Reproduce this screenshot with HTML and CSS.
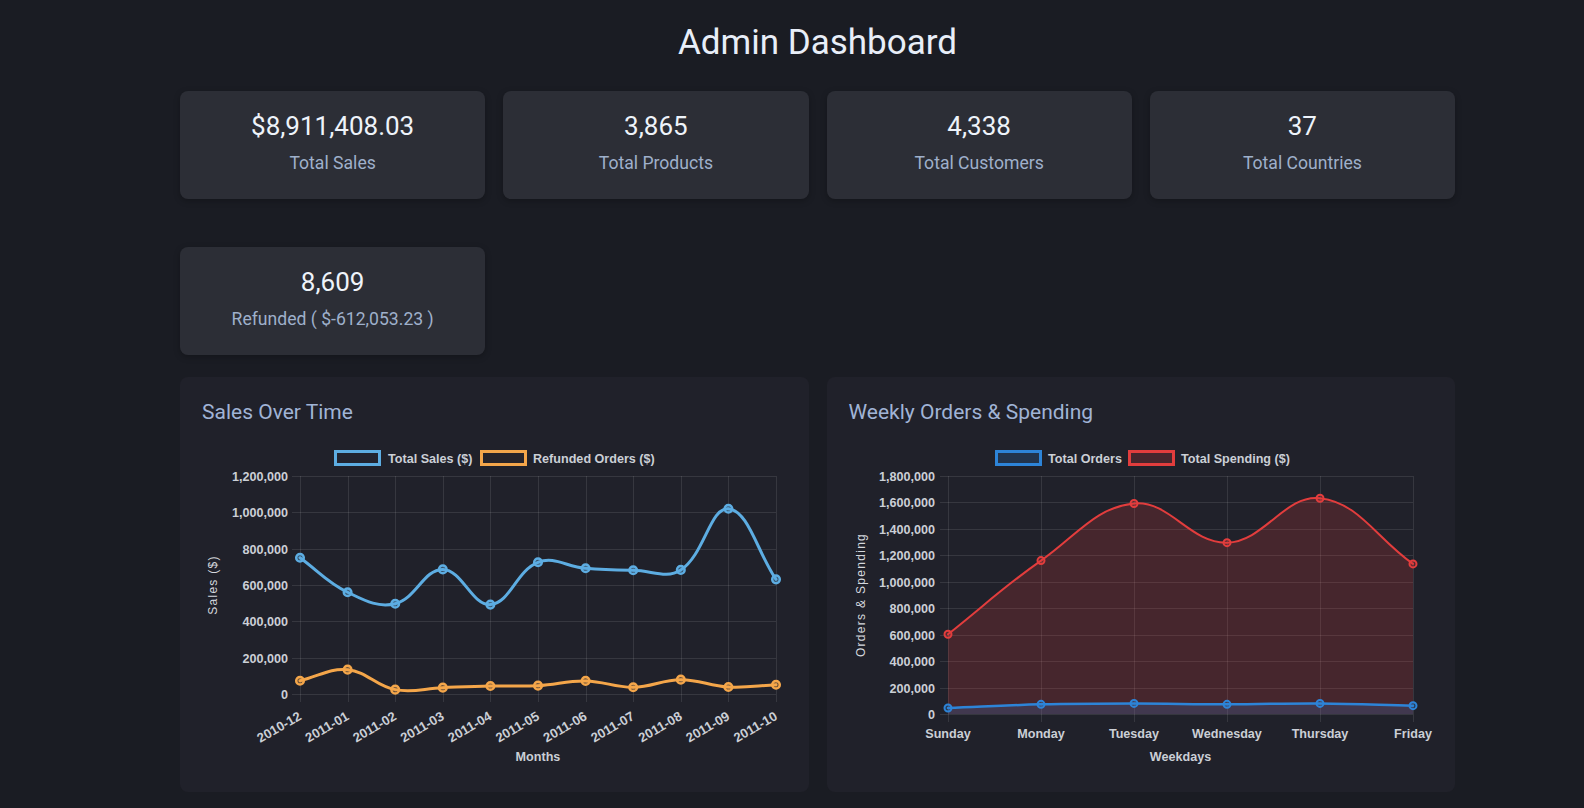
FILE: index.html
```html
<!DOCTYPE html>
<html lang="en">
<head>
<meta charset="utf-8">
<title>Admin Dashboard</title>
<link rel="stylesheet" href="styles.css">
</head>
<body>
<main class="page">
  <h1 class="title">Admin Dashboard</h1>
  <section class="stats">
    <div class="stat"><div class="stat-value">$8,911,408.03</div><div class="stat-label">Total Sales</div></div>
    <div class="stat"><div class="stat-value">3,865</div><div class="stat-label">Total Products</div></div>
    <div class="stat"><div class="stat-value">4,338</div><div class="stat-label">Total Customers</div></div>
    <div class="stat"><div class="stat-value">37</div><div class="stat-label">Total Countries</div></div>
    <div class="stat"><div class="stat-value">8,609</div><div class="stat-label">Refunded ( $-612,053.23 )</div></div>
  </section>
  <section class="charts">
    <div class="panel">
      <h3 class="panel-title">Sales Over Time</h3>
      <svg id="salesChart" class="chart" width="584" height="344" viewBox="0 0 584 344"></svg>
    </div>
    <div class="panel">
      <h3 class="panel-title">Weekly Orders &amp; Spending</h3>
      <svg id="weeklyChart" class="chart" width="584" height="344" viewBox="0 0 584 344"></svg>
    </div>
  </section>
</main>
<script src="script.js"></script>
</body>
</html>
```

FILE: styles.css
```css
* { box-sizing: border-box; }
html, body { margin: 0; background: #1a1c23; }
body {
  padding: 22px 0 0 51px;
  font-family: Roboto, "Noto Sans", Arial, sans-serif;
  color: #e6eef8;
}
.page { width: 1275px; margin: 0 auto; }
.title {
  margin: 0 0 27px;
  font-size: 35px;
  line-height: 42px;
  font-weight: 400;
  text-align: center;
  color: #e8eef8;
}
.stats {
  display: grid;
  grid-template-columns: repeat(4, 1fr);
  column-gap: 18px;
  row-gap: 48px;
}
.stat {
  height: 108px;
  padding-top: 20px;
  text-align: center;
  background: #2c2e36;
  border-radius: 8px;
  box-shadow: 0 2px 6px rgba(0, 0, 0, 0.25);
}
.stat-value { font-size: 26px; line-height: 31px; color: #eef3fa; }
.stat-label { margin-top: 10px; font-size: 17.6px; line-height: 22px; color: #9fb0cb; }
.charts {
  display: grid;
  grid-template-columns: 1fr 1fr;
  gap: 18px;
  margin-top: 22px;
}
.panel {
  background: #20212a;
  border-radius: 8px;
  padding: 23px 22px 12px;
}
.panel-title {
  margin: 0 0 11px;
  font-size: 21px;
  line-height: 25px;
  font-weight: 400;
  color: #a0b4d6;
}
.chart { display: block; width: 584px; height: 344px; overflow: visible; }
.chart text { font-family: "Liberation Sans", Arial, sans-serif; }
.tick, .legend-text, .axis-x { font-size: 12.6px; font-weight: 700; fill: #cbcfd6; }
.tick-rot { font-size: 13.2px; }
.axis-y { font-size: 12px; font-weight: 400; letter-spacing: 1.3px; fill: #d4d7dd; }
.grid line { stroke: rgba(255, 255, 255, 0.1); stroke-width: 1; }
```

FILE: script.js
```js
(function () {
  var NS = 'http://www.w3.org/2000/svg';
  function mk(parent, tag, attrs, text) {
    var e = document.createElementNS(NS, tag);
    for (var k in attrs) e.setAttribute(k, attrs[k]);
    if (text != null) e.textContent = text;
    parent.appendChild(e);
    return e;
  }
  function ctrl(pts, t, a) {
    var out = [];
    for (var i = 0; i < pts.length; i++) {
      var prev = pts[i - 1] || pts[i], cur = pts[i], next = pts[i + 1] || pts[i];
      var d01 = Math.hypot(cur.x - prev.x, cur.y - prev.y);
      var d12 = Math.hypot(next.x - cur.x, next.y - cur.y);
      var s01 = d01 / (d01 + d12) || 0, s12 = d12 / (d01 + d12) || 0;
      var fa = t * s01, fb = t * s12;
      var p = { x: cur.x - fa * (next.x - prev.x), y: cur.y - fa * (next.y - prev.y) };
      var n = { x: cur.x + fb * (next.x - prev.x), y: cur.y + fb * (next.y - prev.y) };
      [p, n].forEach(function (c) {
        c.x = Math.min(Math.max(c.x, a.l), a.r);
        c.y = Math.min(Math.max(c.y, a.t), a.b);
      });
      out.push({ p: p, n: n });
    }
    return out;
  }
  function f(v) { return v.toFixed(2); }
  function pathD(pts, t, a) {
    var c = ctrl(pts, t, a);
    var d = 'M' + f(pts[0].x) + ' ' + f(pts[0].y);
    for (var i = 1; i < pts.length; i++) {
      d += ' C' + f(c[i - 1].n.x) + ' ' + f(c[i - 1].n.y) + ' ' + f(c[i].p.x) + ' ' + f(c[i].p.y) + ' ' + f(pts[i].x) + ' ' + f(pts[i].y);
    }
    return d;
  }
  function draw(svg, cfg) {
    var a = cfg.area, n = cfg.labels.length;
    var xs = cfg.labels.map(function (_, i) { return a.l + (a.r - a.l) * i / (n - 1); });
    function y(v) { return a.b - v / cfg.max * (a.b - a.t); }
    var grid = mk(svg, 'g', { 'class': 'grid' });
    for (var v = 0; v <= cfg.max; v += cfg.step) {
      var yy = Math.round(y(v)) + 0.5;
      mk(grid, 'line', { x1: a.l - 8, y1: yy, x2: a.r, y2: yy });
      mk(svg, 'text', { 'class': 'tick', x: cfg.tickX, y: yy, 'text-anchor': 'end', 'dominant-baseline': 'central' }, v.toLocaleString('en-US'));
    }
    xs.forEach(function (x, i) {
      var xx = Math.round(x) + 0.5;
      mk(grid, 'line', { x1: xx, y1: a.t, x2: xx, y2: a.b + 8 });
      if (cfg.rotate) {
        mk(svg, 'text', { 'class': 'tick tick-rot', 'text-anchor': 'end', 'dominant-baseline': 'central',
          transform: 'translate(' + f(x) + ' ' + cfg.xLabelY + ') rotate(-30)' }, cfg.labels[i]);
      } else {
        mk(svg, 'text', { 'class': 'tick', x: f(x), y: cfg.xLabelY, 'text-anchor': 'middle', 'dominant-baseline': 'central' }, cfg.labels[i]);
      }
    });
    mk(svg, 'text', { 'class': 'axis-x', x: (a.l + a.r) / 2, y: cfg.xTitleY, 'text-anchor': 'middle', 'dominant-baseline': 'central' }, cfg.xTitle);
    mk(svg, 'text', { 'class': 'axis-y', 'text-anchor': 'middle', 'dominant-baseline': 'central',
      transform: 'translate(' + cfg.yTitleX + ' ' + ((a.t + a.b) / 2 + cfg.yTitleShift) + ') rotate(-90)' }, cfg.yTitle);

    cfg.legend.forEach(function (it, i) {
      var ds = cfg.datasets[i];
      mk(svg, 'rect', { x: it.box + 1.5, y: 15.5, width: 44, height: 13, fill: ds.legendFill, stroke: ds.color, 'stroke-width': 3 });
      mk(svg, 'text', { 'class': 'legend-text', x: it.text, y: 22.5, 'dominant-baseline': 'central' }, ds.label);
    });

    var sets = cfg.datasets.map(function (ds) {
      return { ds: ds, pts: ds.data.map(function (v, i) { return { x: xs[i], y: y(v) }; }) };
    });
    sets.slice().reverse().forEach(function (s) {
      if (!s.ds.area) return;
      var d = pathD(s.pts, 0.4, a) + ' L' + f(s.pts[s.pts.length - 1].x) + ' ' + a.b + ' L' + f(s.pts[0].x) + ' ' + a.b + ' Z';
      mk(svg, 'path', { d: d, fill: s.ds.area, stroke: 'none' });
    });
    sets.slice().reverse().forEach(function (s) {
      mk(svg, 'path', { d: pathD(s.pts, 0.4, a), fill: 'none', stroke: s.ds.color, 'stroke-width': s.ds.width, 'stroke-linejoin': 'round', 'stroke-linecap': 'round' });
      s.pts.forEach(function (p) {
        mk(svg, 'circle', { cx: f(p.x), cy: f(p.y), r: s.ds.r, fill: s.ds.pointFill, stroke: s.ds.color, 'stroke-width': s.ds.pw });
      });
    });
  }

  draw(document.getElementById('salesChart'), {
    area: { l: 98, r: 574, t: 40, b: 258 },
    max: 1200000, step: 200000, tickX: 86,
    labels: ['2010-12', '2011-01', '2011-02', '2011-03', '2011-04', '2011-05', '2011-06', '2011-07', '2011-08', '2011-09', '2011-10'],
    rotate: true, xLabelY: 279, xTitle: 'Months', xTitleY: 321,
    yTitle: 'Sales ($)', yTitleX: 11, yTitleShift: 0,
    legend: [{ box: 132, text: 186 }, { box: 278, text: 331 }],
    datasets: [
      { label: 'Total Sales ($)', color: '#5dade2', width: 3, r: 3.8, pw: 2.5, pointFill: 'rgba(93,173,226,0.35)', legendFill: 'rgba(93,173,226,0.03)',
        data: [750000, 560000, 497000, 686000, 492000, 725000, 692000, 681000, 683000, 1020000, 631000] },
      { label: 'Refunded Orders ($)', color: '#f4a64a', width: 3, r: 3.8, pw: 2.5, pointFill: 'rgba(244,166,74,0.35)', legendFill: 'rgba(244,166,74,0.03)',
        data: [73000, 134000, 24000, 35000, 44000, 46000, 72000, 37000, 79000, 38500, 51000] }
    ]
  });

  draw(document.getElementById('weeklyChart'), {
    area: { l: 99, r: 564, t: 40, b: 278 },
    max: 1800000, step: 200000, tickX: 86,
    labels: ['Sunday', 'Monday', 'Tuesday', 'Wednesday', 'Thursday', 'Friday'],
    rotate: false, xLabelY: 298, xTitle: 'Weekdays', xTitleY: 321,
    yTitle: 'Orders & Spending', yTitleX: 12, yTitleShift: 0,
    legend: [{ box: 146, text: 199 }, { box: 279, text: 332 }],
    datasets: [
      { label: 'Total Orders', color: '#2d84d8', width: 2.5, r: 3.5, pw: 2, pointFill: 'rgba(45,132,216,0.25)', legendFill: 'rgba(45,132,216,0.2)', area: 'rgba(45,132,216,0.2)',
        data: [45000, 73000, 80000, 73000, 80000, 63000] },
      { label: 'Total Spending ($)', color: '#e23d3d', width: 2, r: 3.5, pw: 2, pointFill: 'rgba(226,61,61,0.25)', legendFill: 'rgba(226,61,61,0.2)', area: 'rgba(226,61,61,0.2)',
        data: [603000, 1160000, 1592000, 1296000, 1632000, 1135000] }
    ]
  });
})();
```
